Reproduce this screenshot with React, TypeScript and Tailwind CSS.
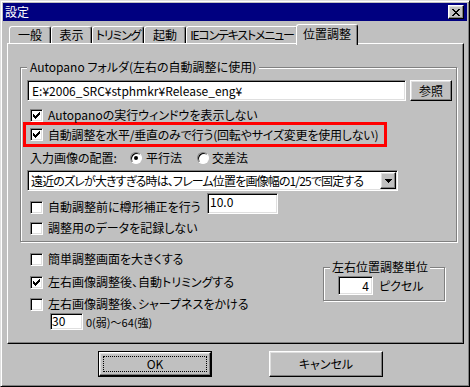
import React from "react";

const raised =
  "border border-t-white border-l-white border-r-black border-b-black shadow-[inset_-1px_-1px_0_#808080,inset_1px_1px_0_#dfdfdf]";
const sunken =
  "border border-t-[#808080] border-l-[#808080] border-r-white border-b-white shadow-[inset_1px_1px_0_#000,inset_-1px_-1px_0_#dfdfdf]";
const etched = "border border-[#808080] shadow-[inset_1px_1px_0_#fff,1px_1px_0_#fff]";

const CheckMark = () => (
  <svg width="7" height="7" viewBox="0 0 7 7" shapeRendering="crispEdges">
    <rect x="6" y="0" width="1" height="1" fill="#000" />
    <rect x="5" y="1" width="2" height="1" fill="#000" />
    <rect x="0" y="2" width="1" height="1" fill="#000" />
    <rect x="4" y="2" width="3" height="1" fill="#000" />
    <rect x="0" y="3" width="2" height="1" fill="#000" />
    <rect x="3" y="3" width="3" height="1" fill="#000" />
    <rect x="0" y="4" width="5" height="1" fill="#000" />
    <rect x="1" y="5" width="3" height="1" fill="#000" />
    <rect x="2" y="6" width="1" height="1" fill="#000" />
  </svg>
);

const Check = ({ on = false }: { on?: boolean }) => (
  <div className={`w-[13px] h-[13px] flex-none bg-white flex items-center justify-center ${sunken}`}>
    {on && <CheckMark />}
  </div>
);

const CheckRow = ({ on = false, label, className = "" }: { on?: boolean; label: string; className?: string }) => (
  <div className={`flex items-center h-[14px] whitespace-nowrap ${className}`}>
    <Check on={on} />
    <span className="ml-[5px]">{label}</span>
  </div>
);

const Radio = ({ on = false }: { on?: boolean }) => (
  <div className="w-[12px] h-[12px] flex-none rounded-full bg-white border border-t-[#808080] border-l-[#808080] border-r-white border-b-white shadow-[inset_1px_1px_0_#000] flex items-center justify-center">
    {on && <div className="w-[4px] h-[4px] rounded-full bg-black" />}
  </div>
);

const Tab = ({ label, w, tight = false }: { label: string; w: string; tight?: boolean }) => (
  <div
    className={`${w} h-[17px] flex-none flex items-center justify-center border-l border-t border-r border-l-white border-t-white border-r-black rounded-t-[3px] shadow-[inset_-1px_0_0_#808080] whitespace-nowrap ${
      tight ? "tracking-[-1.2px]" : ""
    }`}
  >
    {label}
  </div>
);

export default function App() {
  return (
    <div className="w-[470px] h-[387px] bg-[#c0c0c0] text-[12px] leading-[14px] text-black [font-family:'Noto_Sans_CJK_JP',sans-serif] [font-feature-settings:'palt']">
      <div className="w-[470px] h-[387px] p-[2px] flex flex-col border border-t-[#dfdfdf] border-l-[#dfdfdf] border-r-black border-b-black shadow-[inset_1px_1px_0_#fff,inset_-1px_-1px_0_#808080]">
        {/* title bar */}
        <div className="h-[18px] flex-none bg-[#000080] flex items-center justify-between pl-[2px] pr-[3px]">
          <span className="text-white">設定</span>
          <div className={`w-[16px] h-[14px] bg-[#c0c0c0] flex items-center justify-center ${raised}`}>
            <svg width="8" height="7" viewBox="0 0 8 7" shapeRendering="crispEdges">
              <rect x="0" y="0" width="2" height="1" fill="#000" />
              <rect x="6" y="0" width="2" height="1" fill="#000" />
              <rect x="1" y="1" width="2" height="1" fill="#000" />
              <rect x="5" y="1" width="2" height="1" fill="#000" />
              <rect x="2" y="2" width="4" height="1" fill="#000" />
              <rect x="3" y="3" width="2" height="1" fill="#000" />
              <rect x="2" y="4" width="4" height="1" fill="#000" />
              <rect x="1" y="5" width="2" height="1" fill="#000" />
              <rect x="5" y="5" width="2" height="1" fill="#000" />
              <rect x="0" y="6" width="2" height="1" fill="#000" />
              <rect x="6" y="6" width="2" height="1" fill="#000" />
            </svg>
          </div>
        </div>

        {/* tabs */}
        <div className="h-[19px] mt-[3px] pl-[6px] flex items-end flex-none">
          <Tab label="一般" w="w-[42px]" />
          <Tab label="表示" w="w-[41px]" />
          <Tab label="トリミング" w="w-[52px]" tight />
          <Tab label="起動" w="w-[42px]" />
          <Tab label="IEコンテキストメニュー" w="w-[112px]" tight />
          <div className="relative z-10 -ml-[2px] -mb-[2px] w-[62px] h-[21px] pb-[2px] flex-none flex items-center justify-center bg-[#c0c0c0] border-l border-t border-r border-l-white border-t-white border-r-black rounded-t-[3px] shadow-[inset_-1px_0_0_#808080]">
            位置調整
          </div>
        </div>

        {/* tab panel */}
        <div className="ml-[4px] w-[457px] h-[301px] flex-none border border-t-white border-l-white border-r-black border-b-black shadow-[inset_-1px_-1px_0_#808080]">
          {/* Autopano group */}
          <div className={`relative ml-[12px] mt-[23px] w-[437px] h-[175px] ${etched}`}>
            <span className="absolute left-[6px] top-[-8px] px-[3px] bg-[#c0c0c0] whitespace-nowrap">
              Autopano フォルダ(左右の自動調整に使用)
            </span>

            <div className="flex mt-[12px] ml-[6px]">
              <div className={`w-[379px] h-[21px] bg-white flex items-center pl-[4px] whitespace-nowrap ${sunken}`}>
                E:¥2006_SRC¥stphmkr¥Release_eng¥
              </div>
              <div className={`ml-[4px] w-[42px] h-[21px] flex items-center justify-center ${raised}`}>参照</div>
            </div>

            <CheckRow on label="Autopanoの実行ウィンドウを表示しない" className="mt-[7px] ml-[9px]" />

            <div className="ml-[2px] w-[364px] h-[25px] border-[3px] border-[#ff0000] flex items-center pl-[4px] tracking-[-0.2px]">
              <CheckRow on label="自動調整を水平/垂直のみで行う(回転やサイズ変更を使用しない)" />
            </div>

            <div className="flex items-center h-[14px] mt-[4px] ml-[9px] whitespace-nowrap">
              <span className="w-[100px] flex-none">入力画像の配置:</span>
              <div className="w-[67px] flex-none flex items-center">
                <Radio on />
                <span className="ml-[4px]">平行法</span>
              </div>
              <div className="flex items-center">
                <Radio />
                <span className="ml-[3px]">交差法</span>
              </div>
            </div>

            <div className={`mt-[5px] ml-[6px] w-[371px] h-[21px] p-[1px] bg-white flex items-center justify-between ${sunken}`}>
              <span className="pl-[2px] whitespace-nowrap tracking-[-0.85px]">
                遠近のズレが大きすぎる時は、フレーム位置を画像幅の1/25で固定する
              </span>
              <div className={`w-[16px] h-[17px] flex-none bg-[#c0c0c0] flex items-center justify-center ${raised}`}>
                <svg width="7" height="4" viewBox="0 0 7 4" shapeRendering="crispEdges">
                  <rect x="0" y="0" width="7" height="1" fill="#000" />
                  <rect x="1" y="1" width="5" height="1" fill="#000" />
                  <rect x="2" y="2" width="3" height="1" fill="#000" />
                  <rect x="3" y="3" width="1" height="1" fill="#000" />
                </svg>
              </div>
            </div>

            <div className="flex items-end mt-[2px] ml-[9px]">
              <div className="w-[177px] flex-none">
                <CheckRow label="自動調整前に樽形補正を行う" />
              </div>
              <div className={`w-[71px] h-[21px] bg-white pl-[2px] pt-[1px] ${sunken}`}>10.0</div>
            </div>

            <CheckRow label="調整用のデータを記録しない" className="mt-[7px] ml-[9px]" />
          </div>

          {/* lower options */}
          <div className="flex">
            <div className="ml-[22px] w-[280px] flex-none">
              <CheckRow label="簡単調整画面を大きくする" className="mt-[10px]" />
              <CheckRow on label="左右画像調整後、自動トリミングする" className="mt-[9px]" />
              <CheckRow label="左右画像調整後、シャープネスをかける" className="mt-[8px]" />
              <div className="flex items-center mt-[2px] ml-[20px]">
                <div className={`w-[33px] h-[17px] bg-white pl-[1px] leading-[13px] ${sunken}`}>30</div>
                <span className="ml-[3px] text-[11px] whitespace-nowrap">0(弱)〜64(強)</span>
              </div>
            </div>

            <div className={`relative ml-[13px] mt-[25px] w-[122px] h-[34px] ${etched}`}>
              <span className="absolute left-[6px] top-[-8px] px-[2px] bg-[#c0c0c0] whitespace-nowrap">左右位置調整単位</span>
              <div className="flex items-center mt-[8px] ml-[14px]">
                <div className={`w-[35px] h-[19px] bg-white flex items-center justify-end pr-[3px] ${sunken}`}>4</div>
                <span className="ml-[6px]">ピクセル</span>
              </div>
            </div>
          </div>
        </div>

        {/* buttons */}
        <div className="flex mt-[7px] pl-[95px]">
          <div className="w-[114px] h-[26px] border border-black">
            <div className={`w-full h-full p-[3px] ${raised}`}>
              <div className="w-full h-full border border-dotted border-black flex items-center justify-center">OK</div>
            </div>
          </div>
          <div className={`ml-[57px] w-[114px] h-[26px] flex items-center justify-center ${raised}`}>キャンセル</div>
        </div>
      </div>
    </div>
  );
}
